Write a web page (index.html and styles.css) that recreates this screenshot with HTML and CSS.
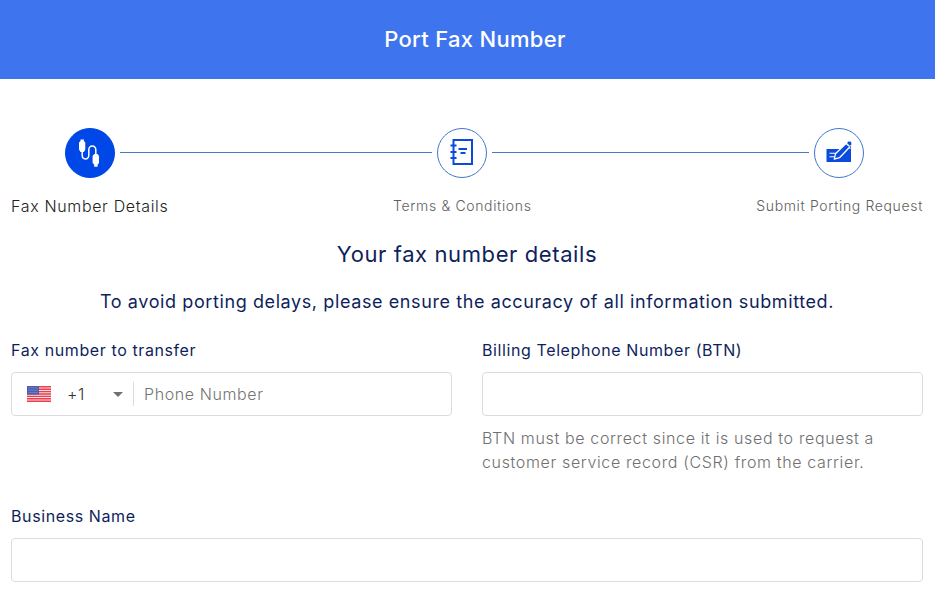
FILE: index.html
```html
<!DOCTYPE html>
<html lang="en">
<head>
  <meta charset="UTF-8" />
  <meta name="viewport" content="width=device-width, initial-scale=1.0"/>
  <title>Port Fax Number</title>
  <link rel="stylesheet" href="styles.css">
</head>
<body>

  <header class="header">
    <h1>Port Fax Number</h1>
  </header>

  <main class="content">
    <div class="stepper">
      <div class="step-icon active">
        <svg width="50" height="50" viewBox="0 0 50 50" fill="#fff">
          <path d="M15.500 11.500h3.400v1.600l1.400 1.500v7L18.900 24h-3.400L14 21.600v-7l1.500-1.500z"/>
          <path d="M29.200 26h3.400l1.400 2v7l-1.400 1.800v2h-3.400v-2L27.600 35v-7z"/>
          <path d="M17.200 23v4.600a3.300 3.300 0 0 0 6.600 0V21.500a3.500 3.500 0 0 1 7 0V27" fill="none" stroke="#fff" stroke-width="1.500"/>
        </svg>
      </div>
      <div class="line first"></div>
      <div class="step-icon">
        <svg width="50" height="50" viewBox="0 0 50 50" fill="none" stroke="#0b4bdc">
          <path d="M16.500 12h18.500v24H16.500z" stroke-width="2"/>
          <path d="M13.500 17.500h6M13.500 24h6M13.500 30h6M21.500 21h8.500M23.500 25h5" stroke-width="1.800"/>
        </svg>
      </div>
      <div class="line second"></div>
      <div class="step-icon">
        <svg width="50" height="50" viewBox="0 0 50 50">
          <path d="M12.500 21h24.500v13H12.500z" fill="#0b4bdc"/>
          <path d="M15.500 25.300h6.500M15.500 28.700h5" stroke="#fff" stroke-width="1.100"/>
          <path d="M20.300 31.200l1.200-5.500L32 15.500l4 3.300L25.500 29.700z" fill="#0b4bdc" stroke="#fff" stroke-width="1.300" stroke-linejoin="round"/>
          <path d="M33 15l1.500-1.500h2l.8 1v1.800L36 18z" fill="#0b4bdc"/>
          <path d="M36 18l.7 1.800-2.400 2.800" fill="none" stroke="#0b4bdc"/>
        </svg>
      </div>
    </div>

    <div class="step-labels">
      <span class="current">Fax Number Details</span>
      <span>Terms &amp; Conditions</span>
      <span>Submit Porting Request</span>
    </div>

    <h2>Your fax number details</h2>
    <p class="notice">To avoid porting delays, please ensure the accuracy of all information submitted.</p>

    <form class="form">
      <div class="field">
        <label for="faxNumber">Fax number to transfer</label>
        <div class="phone">
          <svg class="flag" width="24" height="16" viewBox="0 0 24 16">
            <rect width="24" height="16" fill="#f7dfe4"/>
            <path d="M0 .8h24M0 3.200h24M0 5.600h24M0 8h24M0 10.400h24M0 12.800h24M0 15.200h24" stroke="#ec3f4b" stroke-width="1.400"/>
            <rect width="12" height="8.500" fill="#4a5cb0"/>
            <path d="M1.500 1.800h10M1.500 4.200h10M1.500 6.600h10" stroke="#a9b3dd" stroke-width=".8" stroke-dasharray="1 1"/>
          </svg>
          <span class="code">+1</span>
          <span class="arrow"></span>
          <input type="tel" id="faxNumber" placeholder="Phone Number">
        </div>
      </div>

      <div class="field">
        <label for="btn">Billing Telephone Number (BTN)</label>
        <input type="text" id="btn" class="text-input">
        <p class="hint">BTN must be correct since it is used to request a customer service record (CSR) from the carrier.</p>
      </div>

      <div class="field wide">
        <label for="business">Business Name</label>
        <input type="text" id="business" class="text-input">
      </div>
    </form>
  </main>

</body>
</html>
```
FILE: styles.css
```css
:root {
  --primary: #3e74ed;
  --icon: #0047e8;
  --line: #4a78c8;
  --navy: #0f1f5c;
  --muted: #757575;
  --border: #dcdcdc;
}

* {
  box-sizing: border-box;
  margin: 0;
  padding: 0;
}

body {
  font-family: Inter, sans-serif;
  font-size: 16px;
  letter-spacing: 0.6px;
  background: #fff;
  color: var(--navy);
}

.header {
  height: 79px;
  padding-bottom: 2px;
  background: var(--primary);
  display: flex;
  align-items: center;
  justify-content: center;
}

.header h1 {
  color: #fff;
  font-size: 22px;
  font-weight: 500;
  letter-spacing: 0.3px;
  padding-left: 15px;
  margin-right: 0;
}

.content {
  padding: 49px 12px 0 11px;
}

.stepper {
  display: flex;
  align-items: center;
  gap: 5px;
  padding: 0 59px 0 54px;
}

.step-icon {
  width: 50px;
  height: 50px;
  flex: none;
  border-radius: 50%;
  border: 1px solid #3f78cf;
  display: flex;
  align-items: center;
  justify-content: center;
}

.step-icon svg {
  flex: none;
}

.step-icon.active {
  background: var(--icon);
  border-color: var(--icon);
}

.line {
  height: 1px;
  margin-bottom: 1px;
  background: var(--line);
}

.line.first {
  flex: 311.5;
}

.line.second {
  flex: 317.5;
}

.step-labels {
  display: flex;
  justify-content: space-between;
  align-items: center;
  height: 20px;
  margin-top: 18px;
  font-size: 14px;
  line-height: 16px;
  font-weight: 300;
  letter-spacing: 0.65px;
  color: #606060;
}

.step-labels .current {
  font-size: 16px;
  color: #222;
}

h2 {
  margin-top: 22px;
  font-size: 22px;
  font-weight: 400;
  line-height: 32px;
  text-align: center;
}

.notice {
  margin-top: 20px;
  font-size: 18px;
  line-height: 24px;
  text-align: center;
}

.form {
  display: grid;
  grid-template-columns: 441px 441px;
  justify-content: space-between;
  row-gap: 30px;
  margin-top: 24px;
}

.field.wide {
  grid-column: 1 / -1;
}

label {
  display: block;
  line-height: 24px;
  margin-bottom: 10px;
}

.text-input,
.phone {
  width: 100%;
  height: 44px;
  border: 1px solid var(--border);
  border-radius: 4px;
  background: #fff;
}

.phone {
  display: flex;
  align-items: center;
  padding-left: 15px;
}

.code {
  width: 46px;
  margin-left: 16px;
  font-weight: 300;
  color: #333;
}

.arrow {
  border: 5px solid transparent;
  border-top-color: #707070;
  border-bottom: 0;
}

.phone input {
  flex: 1;
  min-width: 0;
  height: 24px;
  margin-left: 10px;
  padding-left: 10px;
  border: 0;
  border-left: 1px solid var(--border);
  outline: none;
  font: inherit;
  font-weight: 300;
  letter-spacing: inherit;
}

.phone input::placeholder {
  color: var(--muted);
}

.hint {
  margin-top: 10px;
  line-height: 24px;
  font-weight: 300;
  letter-spacing: 0.64px;
  color: #707070;
}
```
